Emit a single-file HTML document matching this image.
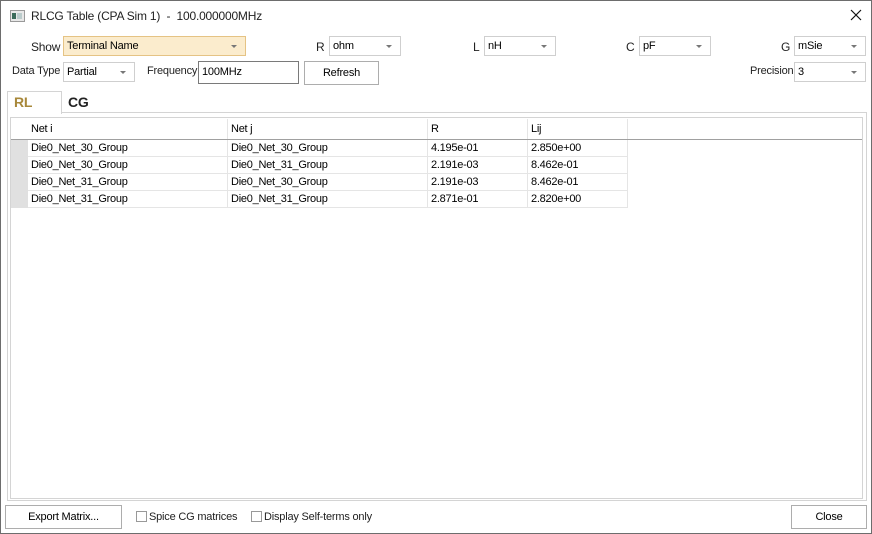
<!DOCTYPE html>
<html><head><style>
*{box-sizing:border-box;margin:0;padding:0}
body{width:872px;height:534px;background:#fff;font-family:"Liberation Sans",Arial,sans-serif;font-size:12px;color:#000;position:relative;overflow:hidden}
.a{position:absolute}
.win{left:0;top:0;width:872px;height:534px;border:1px solid #6d6d6d}
.lbl{position:absolute;font-size:12px;line-height:14px;color:#222;letter-spacing:-0.2px}
.cb{position:absolute;border:1px solid #cfcfcf;background:#fff;height:20px;font-size:11px;line-height:18px;padding-left:3px;letter-spacing:-0.2px}
.cb:after{content:"";position:absolute;right:8px;top:8px;border-left:3px solid transparent;border-right:3px solid transparent;border-top:3px solid #777}
.btn{position:absolute;border:1px solid #adadad;background:#fff;text-align:center;font-size:11px;letter-spacing:-0.2px}
.cell{position:absolute;font-size:11px;line-height:17px;padding-left:3px;border-right:1px solid #e5e5e5;border-bottom:1px solid #e5e5e5;height:17px;white-space:nowrap;letter-spacing:-0.25px}
.chk{position:absolute;width:11px;height:11px;border:1px solid #999;background:#fff}
</style></head><body>
<div class="a win"></div>
<svg class="a" style="left:10px;top:10px" width="15" height="12"><rect x="0.5" y="0.5" width="14" height="11" fill="#e8e8e8" stroke="#999"/><rect x="2" y="3" width="4" height="6" fill="#3a6b5a"/><rect x="7" y="3" width="5" height="6" fill="#bcc"/></svg>
<div class="lbl" style="left:31px;top:9px;font-size:12px">RLCG Table (CPA Sim 1)&nbsp; -&nbsp; 100.000000MHz</div>
<svg class="a" style="left:850px;top:9px" width="12" height="12"><path d="M1 1L11 11M11 1L1 11" stroke="#111" stroke-width="1.2"/></svg>

<div class="lbl" style="left:31px;top:40px">Show</div>
<div class="cb" style="left:63px;top:36px;width:183px;background:#fbeccd;border-color:#e5c384">Terminal Name</div>
<div class="lbl" style="left:316px;top:40px">R</div>
<div class="cb" style="left:329px;top:36px;width:72px">ohm</div>
<div class="lbl" style="left:473px;top:40px">L</div>
<div class="cb" style="left:484px;top:36px;width:72px">nH</div>
<div class="lbl" style="left:626px;top:40px">C</div>
<div class="cb" style="left:639px;top:36px;width:72px">pF</div>
<div class="lbl" style="left:781px;top:40px">G</div>
<div class="cb" style="left:794px;top:36px;width:72px">mSie</div>

<div class="lbl" style="left:12px;top:64px;font-size:11px">Data Type</div>
<div class="cb" style="left:63px;top:62px;width:72px">Partial</div>
<div class="lbl" style="left:147px;top:64px;font-size:11px">Frequency</div>
<div class="cb nodrop" style="left:198px;top:61px;width:101px;height:23px;border-color:#7a7a7a;line-height:20px">100MHz</div>
<style>.nodrop:after{display:none}</style>
<div class="btn" style="left:304px;top:61px;width:75px;height:24px;line-height:22px">Refresh</div>
<div class="lbl" style="left:750px;top:64px;font-size:11px">Precision</div>
<div class="cb" style="left:794px;top:62px;width:72px">3</div>

<div class="a" style="left:7px;top:112px;width:860px;height:389px;border:1px solid #d4d4d4"></div>
<div class="a" style="left:7px;top:91px;width:55px;height:23px;border:1px solid #d4d4d4;border-bottom:none;background:#fff"></div>
<div class="lbl" style="left:14px;top:95px;font-size:14px;color:#a8883a;font-weight:bold">RL</div>
<div class="lbl" style="left:68px;top:95px;font-size:14px;color:#222;font-weight:bold">CG</div>

<div class="a" style="left:10px;top:117px;width:853px;height:382px;border:1px solid #d4d4d4"></div>
<div class="a" style="left:11px;top:118px;width:851px;height:22px;border-bottom:1px solid #a0a0a0"></div>
<div class="cell" style="left:28px;top:119px;width:200px;height:20px;line-height:20px;border-bottom:none">Net i</div>
<div class="cell" style="left:228px;top:119px;width:200px;height:20px;line-height:20px;border-bottom:none">Net j</div>
<div class="cell" style="left:428px;top:119px;width:100px;height:20px;line-height:20px;border-bottom:none">R</div>
<div class="cell" style="left:528px;top:119px;width:100px;height:20px;line-height:20px;border-bottom:none">Lij</div>
<div class="a" style="left:11px;top:140px;width:17px;height:68px;background:#e0e0e0"></div>

<div class="cell" style="left:28px;top:140px;width:200px">Die0_Net_30_Group</div>
<div class="cell" style="left:228px;top:140px;width:200px">Die0_Net_30_Group</div>
<div class="cell" style="left:428px;top:140px;width:100px">4.195e-01</div>
<div class="cell" style="left:528px;top:140px;width:100px">2.850e+00</div>
<div class="cell" style="left:28px;top:157px;width:200px">Die0_Net_30_Group</div>
<div class="cell" style="left:228px;top:157px;width:200px">Die0_Net_31_Group</div>
<div class="cell" style="left:428px;top:157px;width:100px">2.191e-03</div>
<div class="cell" style="left:528px;top:157px;width:100px">8.462e-01</div>
<div class="cell" style="left:28px;top:174px;width:200px">Die0_Net_31_Group</div>
<div class="cell" style="left:228px;top:174px;width:200px">Die0_Net_30_Group</div>
<div class="cell" style="left:428px;top:174px;width:100px">2.191e-03</div>
<div class="cell" style="left:528px;top:174px;width:100px">8.462e-01</div>
<div class="cell" style="left:28px;top:191px;width:200px">Die0_Net_31_Group</div>
<div class="cell" style="left:228px;top:191px;width:200px">Die0_Net_31_Group</div>
<div class="cell" style="left:428px;top:191px;width:100px">2.871e-01</div>
<div class="cell" style="left:528px;top:191px;width:100px">2.820e+00</div>

<div class="btn" style="left:5px;top:505px;width:117px;height:24px;line-height:22px">Export Matrix...</div>
<div class="chk" style="left:136px;top:511px"></div>
<div class="lbl" style="left:149px;top:510px;font-size:11px">Spice CG matrices</div>
<div class="chk" style="left:251px;top:511px"></div>
<div class="lbl" style="left:264px;top:510px;font-size:11px">Display Self-terms only</div>
<div class="btn" style="left:791px;top:505px;width:76px;height:24px;line-height:22px">Close</div>
</body></html>
